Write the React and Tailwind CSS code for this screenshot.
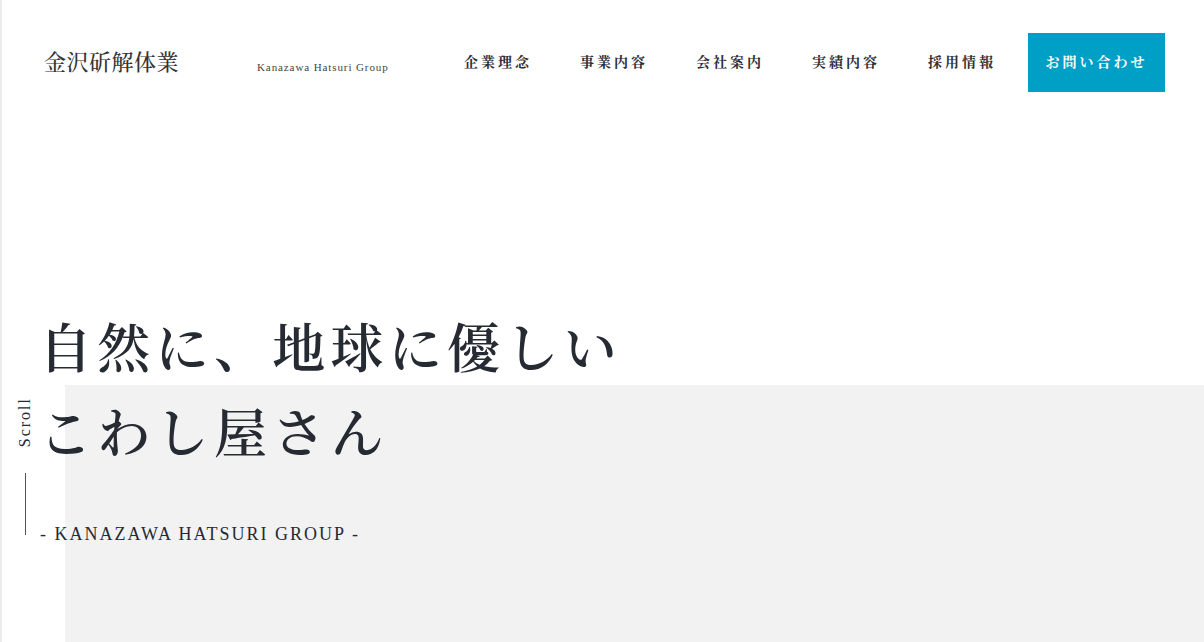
export default function App() {
  const nav = ['企業理念', '事業内容', '会社案内', '実績内容', '採用情報'];
  const serif = "font-['Liberation_Serif','Noto_Serif_CJK_JP','Noto_Sans_CJK_JP',serif]";

  return (
    <div className={`relative h-[642px] w-full overflow-hidden bg-white text-[#262a33] border-l-2 border-[#ececec] ${serif}`}>
      {/* gray backdrop */}
      <div className="absolute left-[63px] right-0 top-[385px] bottom-0 bg-[#f2f2f2]" />

      <header className="relative flex items-center h-[59px] mt-[33px] pl-[42px] pr-[39px]">
        <div className="text-[22px] tracking-[0.5px] font-medium text-[#333]">金沢斫解体業</div>
        <div className="ml-[78px] mt-[10px] text-[11px] tracking-[0.9px] text-[#444]">Kanazawa Hatsuri Group</div>
        <nav className="ml-auto flex items-center">
          {nav.map(n => (
            <a key={n} className="mr-[48px] text-[14px] tracking-[3px] font-bold text-[#2c2f38]">{n}</a>
          ))}
          <a className="-ml-[16px] flex items-center justify-center w-[137px] h-[59px] bg-[#009fc6] text-white text-[14px] font-bold tracking-[3px]">お問い合わせ</a>
        </nav>
      </header>

      <section className="relative pl-[37px] mt-[216px]">
        <h1 className="text-[53px] leading-[85px] tracking-[5.3px] font-semibold">
          自然に、地球に優しい<br />こわし屋さん
        </h1>
        <p className="ml-[1px] mt-[43px] text-[18px] tracking-[2px]">- KANAZAWA HATSURI GROUP -</p>
      </section>

      {/* scroll indicator */}
      <div className="absolute left-[11px] top-[397px] flex flex-col items-center">
        <span className="text-[16px] tracking-[2px] [writing-mode:vertical-rl] rotate-180">Scroll</span>
        <span className="mt-[26px] w-px h-[62px] bg-[#555]" />
      </div>
    </div>
  );
}
